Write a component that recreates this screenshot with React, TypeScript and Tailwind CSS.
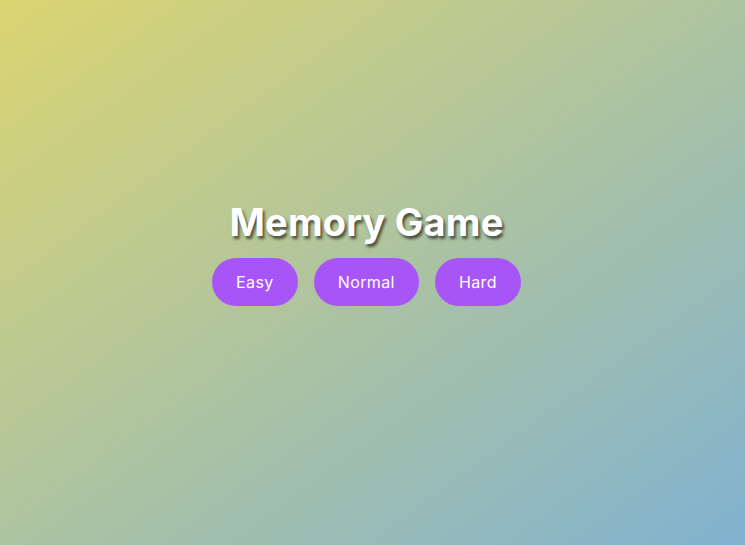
import React from 'react';

const levels = ['Easy', 'Normal', 'Hard'];

const App: React.FC = () => {
  return (
    <div className="min-h-screen w-full bg-[linear-gradient(to_bottom_right,#dbd571,#80b2d0)] flex flex-col items-center justify-center pb-[40px] pr-[12px] font-['Inter','Noto_Sans',sans-serif]">
      <h1 className="text-[38px] font-bold text-white tracking-[0.2px] [text-shadow:2px_3px_3px_rgba(40,40,30,0.75)] leading-[44px] mb-[14px]">
        Memory Game
      </h1>
      <div className="flex gap-4">
        {levels.map(l => (
          <button key={l} className="h-12 px-6 rounded-full bg-[#a855f7] text-white text-[16px] tracking-[0.4px]">
            {l}
          </button>
        ))}
      </div>
    </div>
  );
};

export default App;
